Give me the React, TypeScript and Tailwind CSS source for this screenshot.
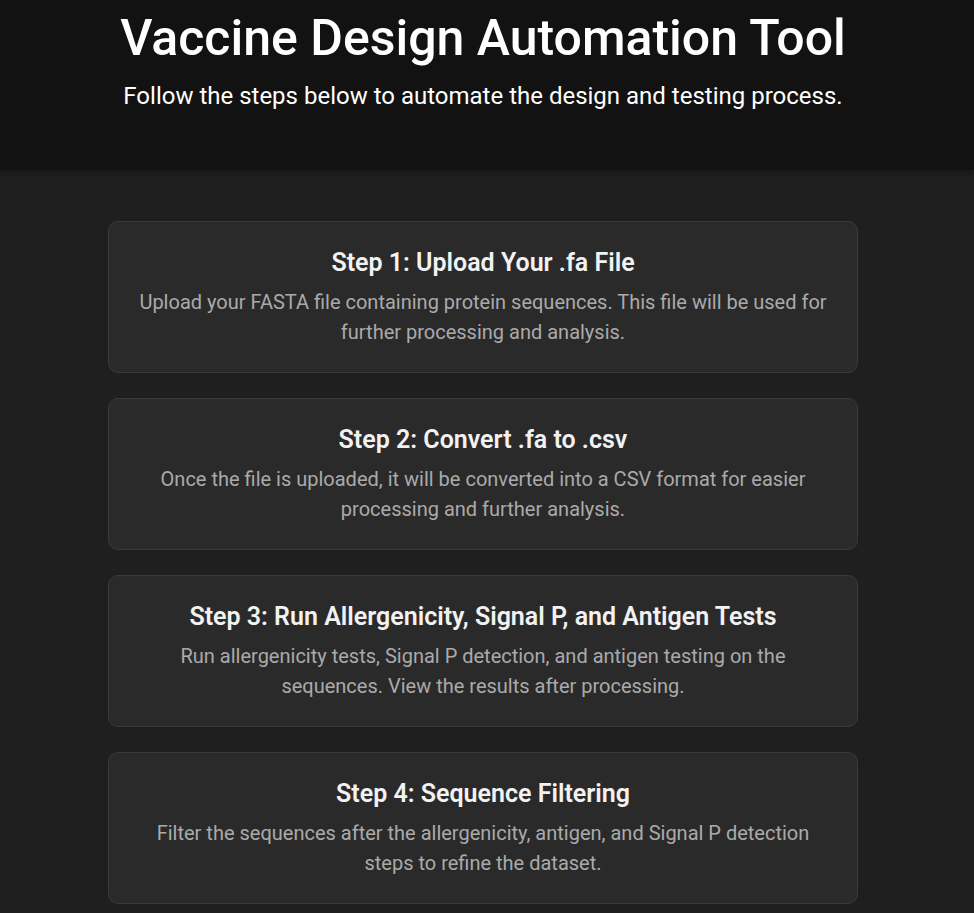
const steps = [
  {
    title: 'Step 1: Upload Your .fa File',
    text: 'Upload your FASTA file containing protein sequences. This file will be used for further processing and analysis.',
  },
  {
    title: 'Step 2: Convert .fa to .csv',
    text: 'Once the file is uploaded, it will be converted into a CSV format for easier processing and further analysis.',
  },
  {
    title: 'Step 3: Run Allergenicity, Signal P, and Antigen Tests',
    text: 'Run allergenicity tests, Signal P detection, and antigen testing on the sequences. View the results after processing.',
  },
  {
    title: 'Step 4: Sequence Filtering',
    text: 'Filter the sequences after the allergenicity, antigen, and Signal P detection steps to refine the dataset.',
  },
]

export default function App() {
  return (
    <div className="min-h-screen bg-[#1f1f1f] text-white" style={{ fontFamily: 'Roboto, "Liberation Sans", sans-serif' }}>
      <header className="bg-[#121212] h-[170px] pr-2 text-center shadow-[0_2px_6px_rgba(0,0,0,0.35)]">
        <h1 className="pt-[8px] text-[50px] leading-[60px] font-medium">Vaccine Design Automation Tool</h1>
        <p className="mt-[13px] text-[24px] leading-[30px]">Follow the steps below to automate the design and testing process.</p>
      </header>

      <main className="pr-2 pt-[51px] pb-10">
        <div className="mx-auto w-[750px] flex flex-col gap-[25px]">
          {steps.map((s) => (
            <div
              key={s.title}
              className="h-[152px] rounded-[10px] border border-[#3a3a3a] bg-[#2a2a2a] px-6 pt-[24px] text-center"
            >
              <h2 className="text-[25px] leading-[34px] font-semibold text-[#f2f2f2]">{s.title}</h2>
              <p className="mt-[7px] text-[20px] leading-[30px] text-[#aaaaaa]">{s.text}</p>
            </div>
          ))}
        </div>
      </main>
    </div>
  )
}
